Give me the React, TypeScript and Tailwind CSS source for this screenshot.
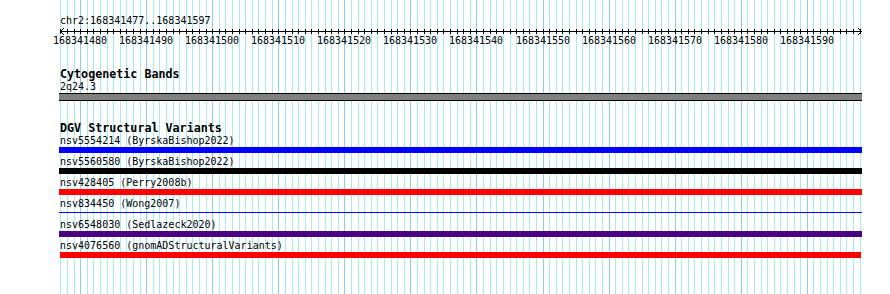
const START = 168341477;
const LINES = 122;
const px = (i: number) => Math.floor(60.8 + 6.606 * i);

const features = [
  { name: "nsv5554214 (ByrskaBishop2022)", color: "bg-[#0000ff]", thin: false },
  { name: "nsv5560580 (ByrskaBishop2022)", color: "bg-black", thin: false },
  { name: "nsv428405 (Perry2008b)", color: "bg-[#ff0000]", thin: false },
  { name: "nsv834450 (Wong2007)", color: "bg-[#0000ff]", thin: true },
  { name: "nsv6548030 (Sedlazeck2020)", color: "bg-[#4b0082]", thin: false },
  { name: "nsv4076560 (gnomADStructuralVariants)", color: "bg-[#ff0000]", thin: false, last: true },
];

function Grid() {
  return (
    <svg className="absolute left-0 top-0" width={890} height={294} shapeRendering="crispEdges">
      {Array.from({ length: LINES }, (_, i) => (
        <rect
          key={i}
          x={px(i)}
          y={0}
          width={1}
          height={294}
          fill={(i - 3) % 10 === 0 ? "#8ecaee" : "#a8eaf0"}
        />
      ))}
    </svg>
  );
}

function Ruler() {
  const labels = [];
  for (let i = 3; i < LINES; i += 10) labels.push(i);
  return (
    <div>
      <svg className="block" width={890} height={8} shapeRendering="crispEdges">
        <rect x={60} y={4} width={802} height={1} fill="#000" />
        {Array.from({ length: LINES }, (_, i) => (
          <rect key={i} x={px(i)} y={2} width={1} height={5} fill="#000" />
        ))}
        <path d="M64 1 L60.5 4.5 L64 8" stroke="#000" fill="none" shapeRendering="auto" />
        <path d="M858 1 L861.5 4.5 L858 8" stroke="#000" fill="none" shapeRendering="auto" />
      </svg>
      <div className="relative mt-[1px] h-[10px]">
        {labels.map((i) => (
          <span
            key={i}
            className="absolute top-0 w-[60px] text-center text-[10px] leading-[10px]"
            style={{ left: px(i) - 30 }}
          >
            {START + i}
          </span>
        ))}
      </div>
    </div>
  );
}

export default function App() {
  return (
    <div className="relative h-[294px] w-[890px] overflow-hidden bg-white font-['DejaVu_Sans_Mono',monospace] text-black">
      <Grid />
      <div className="relative flex flex-col">
        <div className="mt-[15px] pl-[60px] text-[10px] leading-[12px]">chr2:168341477..168341597</div>
        <Ruler />

        <div className="mt-[21px] pl-[60px] text-[11.7px] font-bold leading-[14px]">Cytogenetic Bands</div>
        <div className="pl-[60px] text-[10px] leading-[12px]">2q24.3</div>
        <div className="ml-[59px] h-[8px] w-[803px] border-y border-black bg-[#808080]" />

        <div className="mt-[20px] pl-[60px] text-[11.7px] font-bold leading-[14px]">DGV Structural Variants</div>
        <div className="flex flex-col gap-[3px]">
          {features.map((f) => (
            <div key={f.name} className="flex flex-col">
              <div className="pl-[60px] text-[10px] leading-[12px]">{f.name}</div>
              {f.thin ? (
                <div className="h-[6px] pt-[2px]">
                  <div className={`ml-[59px] h-[1px] w-[803px] ${f.color}`} />
                </div>
              ) : (
                <div
                  className={`h-[6px] ${f.last ? "ml-[60px] w-[801px]" : "ml-[59px] w-[803px]"} ${f.color}`}
                />
              )}
            </div>
          ))}
        </div>
      </div>
    </div>
  );
}
